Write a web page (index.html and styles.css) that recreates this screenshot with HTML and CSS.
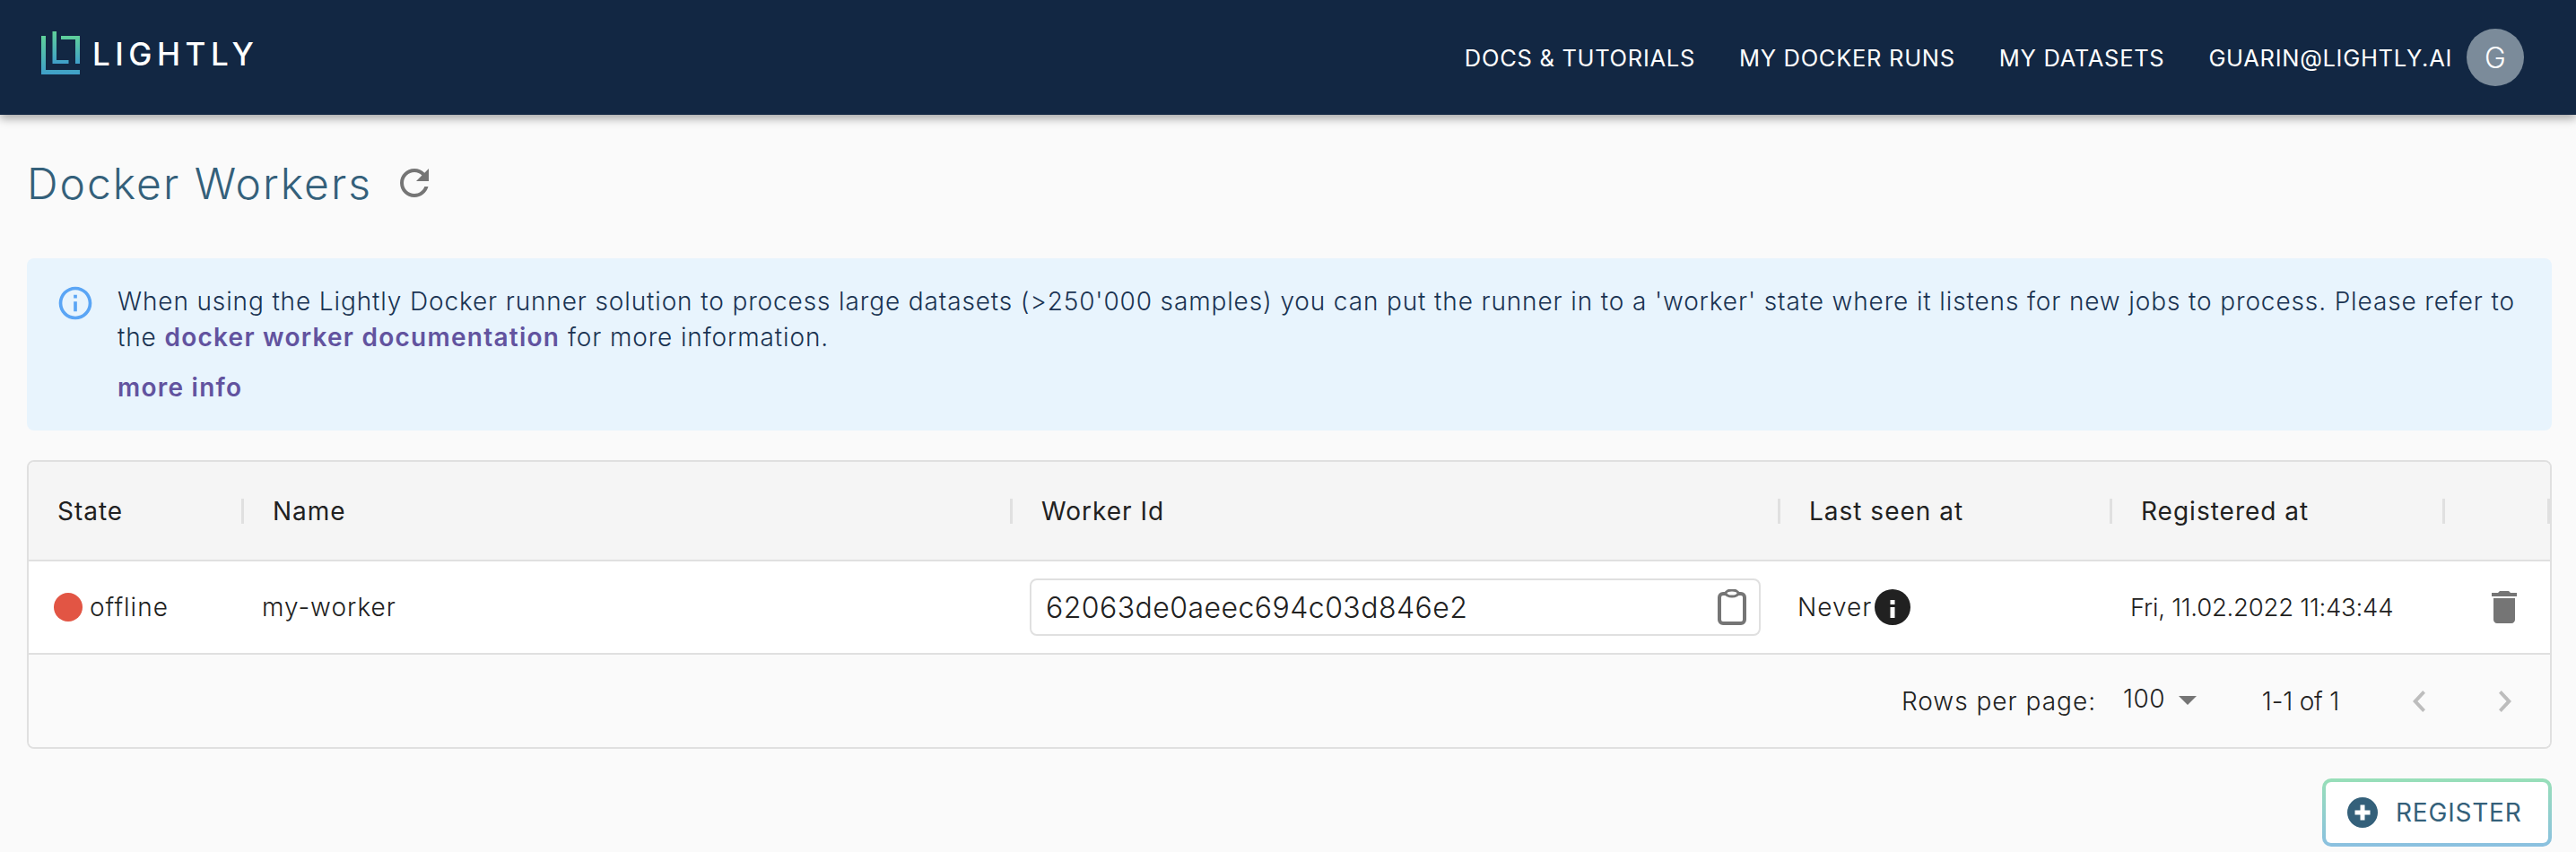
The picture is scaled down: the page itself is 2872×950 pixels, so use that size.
FILE: index.html
```html
<!DOCTYPE html>
<html lang="en">
<head>
    <meta charset="UTF-8">
    <meta name="viewport" content="width=device-width, initial-scale=1.0">
    <title>Lightly</title>
    <link rel="stylesheet" href="styles.css">
</head>
<body>
    <div class="topBar">
        <a class="logo" href="#">
            <svg class="logoMark" viewBox="0 0 43 48">
                <defs>
                    <linearGradient id="logoFill" x1="0" y1="0" x2="0" y2="1">
                        <stop offset="0" stop-color="#5fd09a"/>
                        <stop offset="1" stop-color="#3f9fca"/>
                    </linearGradient>
                </defs>
                <path fill="url(#logoFill)" d="M0 5h5v38h38v5H0z"/>
                <path fill="url(#logoFill)" d="M12.5 0H17v32h13.500v4H12.500z"/>
                <path fill="url(#logoFill)" d="M22 5h21v31h-5V9H22z"/>
            </svg>
            <span class="logoText">LIGHTLY</span>
        </a>
        <div class="navLinks">
            <a href="#">DOCS &amp; TUTORIALS</a>
            <a href="#">MY DOCKER RUNS</a>
            <a href="#">MY DATASETS</a>
            <a href="#">GUARIN@LIGHTLY.AI</a>
        </div>
        <div class="avatar">G</div>
    </div>

    <div class="page">
        <div class="titleRow">
            <h1>Docker Workers</h1>
            <svg class="refreshIcon" viewBox="0 0 24 24"><path d="M17.65 6.350C16.200 4.900 14.210 4 12 4c-4.420 0-7.990 3.580-7.990 8s3.570 8 7.990 8c3.730 0 6.840-2.550 7.730-6h-2.080c-.82 2.330-3.040 4-5.650 4-3.310 0-6-2.690-6-6s2.690-6 6-6c1.660 0 3.140.69 4.220 1.780L13 11h7V4l-2.350 2.350z"/></svg>
        </div>

        <div class="notice">
            <svg class="noticeIcon" viewBox="0 0 24 24"><path d="M11 7h2v2h-2zm0 4h2v6h-2zm1-9C6.480 2 2 6.480 2 12s4.480 10 10 10 10-4.480 10-10S17.520 2 12 2zm0 18c-4.410 0-8-3.590-8-8s3.590-8 8-8 8 3.590 8 8-3.590 8-8 8z"/></svg>
            <div class="noticeBody">
                <p>When using the Lightly Docker runner solution to process large datasets (&gt;250'000 samples) you can put the runner in to a 'worker' state where it listens for new jobs to process. Please refer to the <a href="#">docker worker documentation</a> for more information.</p>
                <a class="moreInfo" href="#">more info</a>
            </div>
        </div>

        <div class="workerTable">
            <div class="headRow">
                <div class="headCell">State</div>
                <div class="headCell">Name</div>
                <div class="headCell">Worker Id</div>
                <div class="headCell">Last seen at</div>
                <div class="headCell">Registered at</div>
                <div class="headCell"></div>
            </div>
            <div class="dataRow">
                <div class="stateCell"><span class="stateDot"></span>offline</div>
                <div class="nameCell">my-worker</div>
                <div class="idCell">
                    <div class="idBox">
                        <span>62063de0aeec694c03d846e2</span>
                        <svg class="copyIcon" viewBox="0 0 32 40">
                            <rect x="2" y="5" width="28" height="33" rx="4"/>
                            <ellipse cx="16" cy="4.500" rx="7" ry="3.500"/>
                        </svg>
                    </div>
                </div>
                <div class="seenCell">Never
                    <svg class="seenIcon" viewBox="0 0 40 40"><path fill-rule="evenodd" d="M20 0a20 20 0 1 0 0 40 20 20 0 0 0 0-40zm-2.500 12h5v5h-5zm0 8h5v12h-5z"/></svg>
                </div>
                <div class="dateCell">Fri, 11.02.2022 11:43:44</div>
                <div class="trashCell">
                    <svg class="trashIcon" viewBox="0 0 28 36"><path d="M2 32c0 2.200 1.800 4 4 4h16c2.200 0 4-1.800 4-4V8H2zM28 2h-7l-2-2H9L7 2H0v4h28z"/></svg>
                </div>
            </div>
            <div class="footRow">
                <span class="rowsLabel">Rows per page:</span>
                <span class="rowsValue">100</span>
                <span class="rowsArrow"></span>
                <span class="rowsRange">1-1 of 1</span>
                <svg class="pageArrow" viewBox="0 0 14 24"><path d="M14 2.800 11.200 0 0 12l11.200 12 2.800-2.800L5.400 12z"/></svg>
                <svg class="pageArrow" viewBox="0 0 14 24"><path d="M0 2.800 2.800 0 14 12 2.800 24 0 21.200 8.600 12z"/></svg>
            </div>
        </div>

        <div class="actions">
            <button class="registerBtn">
                <svg class="plusIcon" viewBox="0 0 34 34"><path fill-rule="evenodd" d="M17 0a17 17 0 1 0 0 34 17 17 0 0 0 0-34zm-2.500 8.500h5v6h6v5h-6v6h-5v-6h-6v-5h6z"/></svg>
                REGISTER
            </button>
        </div>
    </div>
</body>
</html>
```

FILE: styles.css
```css
html, body
{
    margin: 0;
    height: 950px;
    overflow: hidden;
}
body
{
    background: #fafafa;
    font-family: "Inter", "Liberation Sans", sans-serif;
    font-weight: 300;
    color: #212121;
}
a
{
    text-decoration: none;
}

.topBar
{
    display: flex;
    align-items: center;
    height: 128px;
    padding: 0 58px 0 46px;
    background: #122743;
    box-shadow: 0 4px 10px rgba(0,0,0,0.35);
    position: relative;
}
.logo
{
    display: flex;
    align-items: center;
    gap: 14px;
    margin-right: auto;
    margin-top: -10px;
}
.logoMark
{
    width: 43px;
    height: 48px;
}
.logoText
{
    color: #fff;
    font-size: 35px;
    font-weight: 500;
    letter-spacing: 5.5px;
    margin-top: 1px;
}
.navLinks
{
    display: flex;
    gap: 49px;
}
.navLinks > a
{
    color: #fff;
    font-size: 25.5px;
    font-weight: 400;
    letter-spacing: 0.7px;
}
.avatar
{
    width: 64px;
    height: 64px;
    margin-left: 16px;
    border-radius: 50%;
    background: #7b8b9a;
    color: #fff;
    font-size: 32px;
    display: flex;
    align-items: center;
    justify-content: center;
}

.page
{
    padding: 0 27px 0 30px;
}
.titleRow
{
    display: flex;
    align-items: center;
    height: 88px;
    padding-top: 2px;
    margin-top: 30px;
}
h1
{
    margin: 0;
    font-size: 48px;
    font-weight: 300;
    letter-spacing: 2px;
    color: #34607a;
}
.refreshIcon
{
    width: 48px;
    height: 48px;
    margin-left: 23px;
    fill: #757575;
}

.notice
{
    display: flex;
    height: 192px;
    box-sizing: border-box;
    margin-top: 40px;
    padding: 28px 30px 0 32px;
    border-radius: 8px;
    background: #e8f4fd;
    color: #1a3352;
    font-size: 28px;
    letter-spacing: 0.87px;
}
.noticeIcon
{
    flex: none;
    width: 44px;
    height: 44px;
    fill: #5aa5f5;
}
.noticeBody
{
    margin-left: 25px;
}
.noticeBody p
{
    margin: 0;
    line-height: 40px;
}
.noticeBody a
{
    color: #62539f;
    font-weight: 600;
    letter-spacing: 1.25px;
}
.moreInfo
{
    display: block;
    margin-top: 16px;
    line-height: 40px;
}

.workerTable
{
    margin-top: 33px;
    border: 2px solid #e0e0e0;
    border-radius: 8px;
    overflow: hidden;
    font-size: 28px;
    letter-spacing: 1px;
}
.headRow, .dataRow
{
    display: grid;
    grid-template-columns: 240px 857px 856px 370px 371px 1fr;
    align-items: center;
}
.headRow
{
    height: 109px;
    background: #f5f5f5;
    font-weight: 400;
}
.headCell
{
    height: 28px;
    line-height: 28px;
    padding-left: 32px;
    border-right: 3px solid #e0e0e0;
    box-sizing: border-box;
}
.dataRow
{
    height: 102px;
    background: #fff;
    border-top: 2px solid #e0e0e0;
    border-bottom: 2px solid #e0e0e0;
}
.stateCell
{
    display: flex;
    align-items: center;
    gap: 8px;
    padding-left: 28px;
}
.stateDot
{
    width: 32px;
    height: 32px;
    border-radius: 50%;
    background: #e25544;
}
.nameCell, .dateCell
{
    padding-left: 20px;
}
.idCell
{
    padding-left: 19px;
}
.idBox
{
    display: flex;
    align-items: center;
    justify-content: space-between;
    width: 815px;
    height: 64px;
    box-sizing: border-box;
    padding: 0 14px 0 16px;
    border: 2px solid #e0e0e0;
    border-radius: 8px;
    font-size: 32px;
    letter-spacing: 0.45px;
}
.copyIcon
{
    width: 32px;
    height: 40px;
}
.copyIcon rect
{
    fill: none;
    stroke: #757575;
    stroke-width: 4;
}
.copyIcon ellipse
{
    fill: #fff;
    stroke: #757575;
    stroke-width: 3;
}
.seenCell
{
    display: flex;
    align-items: center;
    gap: 3px;
    padding-left: 19px;
}
.seenIcon
{
    width: 40px;
    height: 40px;
    fill: #212121;
}
.dateCell
{
    font-size: 27.5px;
    letter-spacing: -0.23px;
}
.trashCell
{
    padding-left: 52px;
    display: flex;
}
.trashIcon
{
    width: 28px;
    height: 36px;
    fill: #757575;
}
.footRow
{
    display: flex;
    align-items: center;
    justify-content: flex-end;
    height: 103px;
    padding-right: 43px;
    background: #fafafa;
    letter-spacing: 1px;
}
.rowsValue
{
    margin-left: 30px;
    margin-top: -6px;
    letter-spacing: 0.4px;
}
.rowsArrow
{
    margin-left: 15px;
    margin-top: -2px;
    border-left: 10px solid transparent;
    border-right: 10px solid transparent;
    border-top: 10px solid #757575;
}
.rowsRange
{
    margin-left: 73px;
    letter-spacing: -0.2px;
}
.pageArrow
{
    width: 14px;
    height: 24px;
    margin-left: 82px;
    fill: #bdbdbd;
}

.actions
{
    display: flex;
    justify-content: flex-end;
    margin-top: 33px;
}
.registerBtn
{
    display: flex;
    align-items: center;
    gap: 20px;
    width: 256px;
    height: 76px;
    padding: 0 0 0 24px;
    box-sizing: border-box;
    border: 4px solid transparent;
    border-radius: 10px;
    background: linear-gradient(#fff, #fff) padding-box, linear-gradient(#98dfb8, #8ac0e0) border-box;
    color: #34607a;
    font-family: "Inter", sans-serif;
    font-size: 28px;
    font-weight: 400;
    letter-spacing: 0.8px;
}
.plusIcon
{
    width: 34px;
    height: 34px;
    fill: #34607a;
}
```
